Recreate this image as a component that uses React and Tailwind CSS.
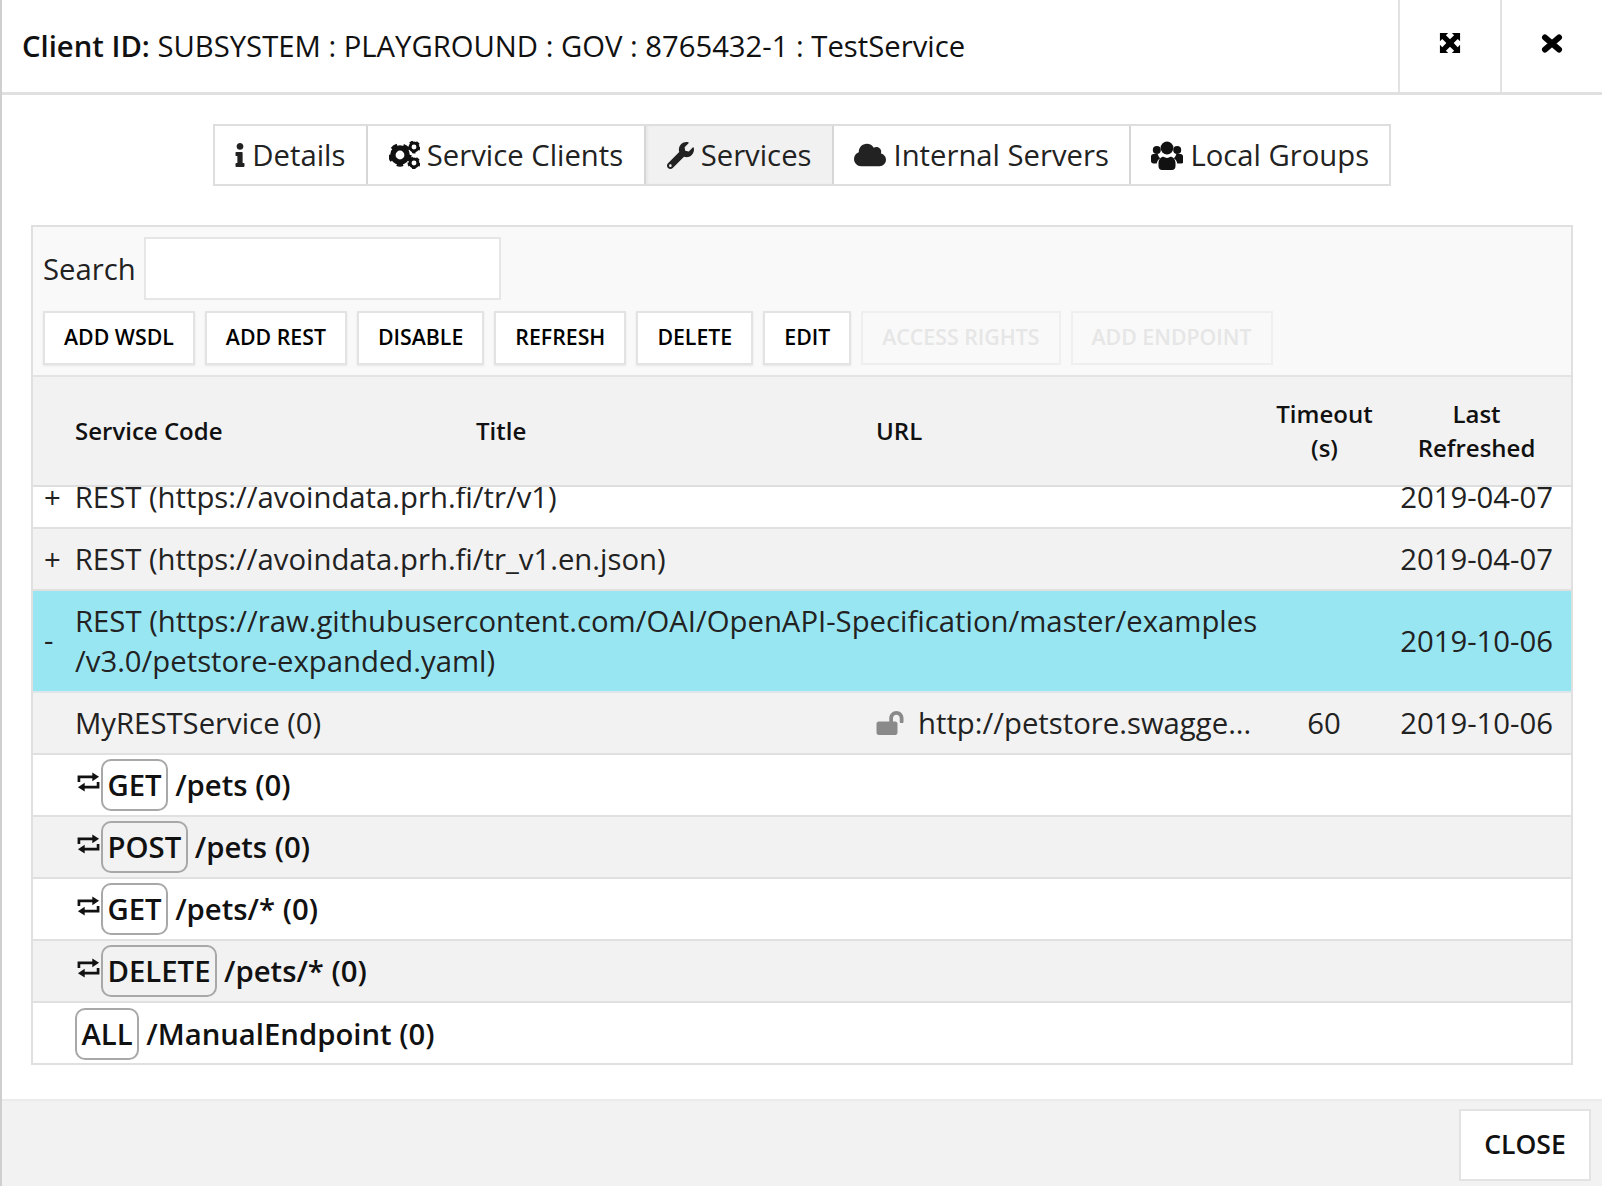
import React from "react";
import { FaInfo, FaWrench, FaCloud, FaLockOpen } from "react-icons/fa";

const Expand = () => (
  <svg viewBox="0 0 24 24" className="w-[22px] h-[22px]" fill="currentColor">
    <path d="M1 1h9L7.5 3.6 12 8l4.5-4.4L14 1h9v9l-2.6-2.5L16 12l4.4 4.5L23 14v9h-9l2.5-2.6L12 16l-4.5 4.4L10 23H1v-9l2.6 2.5L8 12 3.6 7.5 1 10z" />
  </svg>
);

const Cross = () => (
  <svg viewBox="0 0 22 19" className="w-[22px] h-[19px]" fill="none" stroke="#000" strokeWidth="6" strokeLinecap="round">
    <path d="M4 3.5L18 15.500M18 3.500L4 15.500" />
  </svg>
);

const Retweet = () => (
  <svg viewBox="0 0 24 20" className="w-[23px] h-[20px] mr-[1px] -mt-[6px]" fill="none" stroke="#111" strokeWidth="2.8">
    <path d="M2 10V4.600h16" />
    <path d="M16 0l7 4.600L16 9.200z" fill="#111" stroke="none" />
    <path d="M22 10v5.400H6" />
    <path d="M8 10.800L1 15.400 8 20z" fill="#111" stroke="none" />
  </svg>
);

const Gear = ({ cx, cy, r }) => (
  <g>
    <circle cx={cx} cy={cy} r={r * 0.68} fill="none" stroke="#111" strokeWidth={r * 0.52} />
    <circle cx={cx} cy={cy} r={r * 0.96} fill="none" stroke="#111" strokeWidth={r * 0.3} strokeDasharray={`${r * 0.6} ${r * 0.606}`} />
  </g>
);

const Cogs = () => (
  <svg viewBox="0 0 31 28" className="w-[31px] h-[28px]">
    <Gear cx={11} cy={14} r={10.5} />
    <Gear cx={25} cy={6} r={5.8} />
    <Gear cx={25} cy={22} r={5.8} />
  </svg>
);

const Users = () => (
  <svg viewBox="0 0 32 29" className="w-[32px] h-[29px]" fill="#111">
    <circle cx="16" cy="7" r="6.400" />
    <circle cx="5.800" cy="9" r="4" />
    <circle cx="26.200" cy="9" r="4" />
    <path d="M0 15.500c0-1.500 1-2.500 2.500-2.500h4.200c.5 2 1.400 3.200 2.600 4.200-2 1.200-3.300 3.200-3.600 5.300H2.500C1 22.500 0 21.500 0 20z" />
    <path d="M32 15.500c0-1.500-1-2.500-2.500-2.500h-4.200c-.5 2-1.400 3.200-2.600 4.200 2 1.200 3.300 3.200 3.600 5.300h4.200c1.500 0 2.500-1 2.500-2.500z" />
    <path d="M7.500 22c0-3.500 2.500-6.200 5-6.200 1 .7 2.200 1.100 3.500 1.100s2.500-.4 3.500-1.100c2.500 0 5 2.700 5 6.200v3c0 2.400-1.500 4-3.500 4H11c-2 0-3.500-1.600-3.500-4z" />
  </svg>
);

const Btn = ({ children, disabled }) => (
  <button className={`h-[54px] px-[19px] pb-[2px] border-2 text-[21.3px] font-semibold ${disabled ? "text-[#e6e6e6] border-[#efefef] bg-[#f9f9f9]" : "text-black border-[#e3e3e3] bg-white shadow-[0_1px_2px_rgba(0,0,0,0.08)]"}`}>
    {children}
  </button>
);

const Tab = ({ icon, label, active, width }) => (
  <div className={`flex items-center justify-center gap-[7px] h-full border-r-2 last:border-r-0 border-[#d6d6d6] text-[29.25px] text-[#222] ${active ? "bg-[#f1f1f1] shadow-[inset_2px_0_2px_rgba(0,0,0,0.04)]" : "bg-white"} ${width}`}>
    {icon}
    <span className="pt-[2px]">{label}</span>
  </div>
);

const Method = ({ m }) => (
  <span className="inline-block h-[52px] leading-[48px] px-[4.5px] border-2 border-[#a8a8a8] rounded-[10px] font-semibold">{m}</span>
);

const EndRow = ({ m, path, shaded, noIcon }) => (
  <div className={`h-[62px] flex items-center border-b-2 border-[#e0e0e0] last:border-b-0 text-[29.3px] font-semibold text-[#111] ${noIcon ? "pl-[42px]" : "pl-[44px]"} ${shaded ? "bg-[#f2f2f2]" : "bg-white"}`}>
    {!noIcon && <Retweet />}
    <Method m={m} />
    <span className="ml-[7px] pt-[2px]">{path}</span>
  </div>
);

export default function App() {
  return (
    <div className="relative h-[1186px] w-[1602px] overflow-hidden bg-white flex flex-col border-l-2 border-[#cfcfcf] text-black" style={{ fontFamily: '"Open Sans", sans-serif' }}>
      <div className="absolute -left-[2px] top-[50px] w-[2px] h-[16px] bg-[#333]" />
      <div className="absolute -left-[2px] top-[87px] w-[2px] h-[61px] bg-[#7fc4d0]" />
      {/* header */}
      <div className="h-[95px] shrink-0 flex border-b-[3px] border-[#e0e0e0]">
        <div className="flex-1 pl-[20px] pt-[25px] text-[29.25px] leading-[42px] text-[#111] whitespace-nowrap">
          <span className="font-semibold">Client ID: </span>SUBSYSTEM : PLAYGROUND : GOV : 8765432-1 : TestService
        </div>
        <div className="w-[102px] h-[92px] border-l-2 border-[#e2e2e2] flex justify-center pt-[32px]"><Expand /></div>
        <div className="w-[102px] h-[92px] border-l-2 border-[#e2e2e2] flex justify-center pt-[34px]"><Cross /></div>
      </div>

      {/* tabs */}
      <div className="mt-[29px] ml-[211px] w-[1178px] h-[62px] shrink-0 flex border-2 border-[#dedede]">
        <Tab width="w-[153px]" icon={<FaInfo className="w-[10px] h-[24px]" />} label="Details" />
        <Tab width="w-[279px]" icon={<Cogs />} label="Service Clients" />
        <Tab width="w-[188px]" active icon={<FaWrench className="w-[27px] h-[27px]" />} label="Services" />
        <Tab width="w-[298px]" icon={<FaCloud className="w-[32px] h-[26px]" />} label="Internal Servers" />
        <Tab width="w-[258px]" icon={<Users />} label="Local Groups" />
      </div>

      {/* table card */}
      <div className="mt-[39px] ml-[29px] w-[1542px] h-[840px] shrink-0 border-2 border-[#e0e0e0] flex flex-col">
        <div className="h-[150px] shrink-0 bg-[#f9f9f9] border-b-2 border-[#e3e3e3] pl-[10px] pt-[10px]">
          <div className="flex items-center h-[63px]">
            <span className="text-[29.25px] text-[#222] mr-[8px] pt-[2px]">Search</span>
            <div className="w-[357px] h-[63px] bg-white border-2 border-[#e6e6e6]" />
          </div>
          <div className="flex gap-[10px] mt-[11px]">
            <Btn>ADD WSDL</Btn>
            <Btn>ADD REST</Btn>
            <Btn>DISABLE</Btn>
            <Btn>REFRESH</Btn>
            <Btn>DELETE</Btn>
            <Btn>EDIT</Btn>
            <Btn disabled>ACCESS RIGHTS</Btn>
            <Btn disabled>ADD ENDPOINT</Btn>
          </div>
        </div>

        {/* column heads */}
        <div className="h-[110px] shrink-0 bg-[#f2f2f2] border-b-2 border-[#dedede] grid grid-cols-[42px_401px_400px_376px_150px_1fr] items-center text-[24px] font-semibold text-[#111] leading-[34px]">
          <div />
          <div>Service Code</div>
          <div>Title</div>
          <div>URL</div>
          <div className="text-center -ml-[5px]">Timeout<br />(s)</div>
          <div className="text-center -ml-[20px]">Last<br />Refreshed</div>
        </div>

        {/* rows */}
        <div className="flex-1 overflow-hidden text-[29.3px] text-[#222]">
          <div className="h-[42px] overflow-hidden border-b-2 border-[#e0e0e0] bg-white">
            <div className="flex justify-between pr-[18px] -mt-[19px] h-[60px] items-center">
              <span className="pl-[11px]">+<span className="ml-[14px]">REST (https://avoindata.prh.fi/tr/v1)</span></span>
              <span>2019-04-07</span>
            </div>
          </div>
          <div className="h-[62px] flex justify-between items-center pt-[2px] pr-[18px] pl-[11px] bg-[#f2f2f2] border-b-2 border-[#e0e0e0]">
            <span>+<span className="ml-[14px]">REST (https://avoindata.prh.fi/tr_v1.en.json)</span></span>
            <span>2019-04-07</span>
          </div>
          <div className="h-[102px] flex items-center pr-[18px] pl-[11px] bg-[#99e6f3] border-b-2 border-[#dde6e8]">
            <span className="w-[31px]">-</span>
            <span className="flex-1 leading-[40px]">REST (https://raw.githubusercontent.com/OAI/OpenAPI-Specification/master/examples<br />/v3.0/petstore-expanded.yaml)</span>
            <span className="pt-[2px]">2019-10-06</span>
          </div>
          <div className="h-[62px] flex items-center pt-[2px] pr-[18px] pl-[42px] bg-[#f2f2f2] border-b-2 border-[#e0e0e0]">
            <span className="w-[801px]">MyRESTService (0)</span>
            <FaLockOpen className="text-[#8a8a8a] w-[28px] h-[24px] -mt-[2px]" />
            <span className="ml-[14px] w-[374px] whitespace-nowrap">http://petstore.swagge...</span>
            <span className="w-[64px] text-center">60</span>
            <span className="ml-auto">2019-10-06</span>
          </div>
          <EndRow m="GET" path="/pets (0)" />
          <EndRow m="POST" path="/pets (0)" shaded />
          <EndRow m="GET" path="/pets/* (0)" />
          <EndRow m="DELETE" path="/pets/* (0)" shaded />
          <EndRow m="ALL" path="/ManualEndpoint (0)" noIcon />
        </div>
      </div>

      {/* footer */}
      <div className="mt-[34px] flex-1 bg-[#f2f2f2] border-t-2 border-[#ebebeb] flex justify-end items-start pt-[8px] pr-[11px]">
        <button className="w-[132px] h-[72px] bg-white border-2 border-[#e3e3e3] text-[26.5px] font-semibold text-[#111]">CLOSE</button>
      </div>
    </div>
  );
}
